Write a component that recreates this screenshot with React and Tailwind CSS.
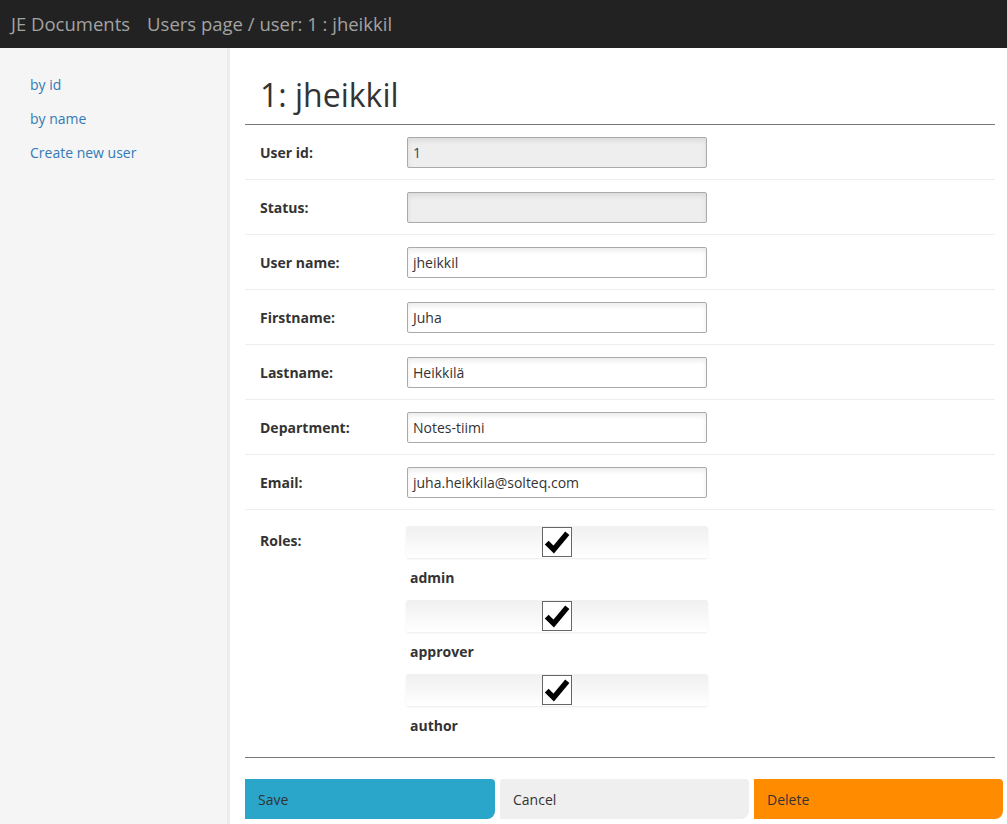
import React from 'react';

const FONT = { fontFamily: '"Open Sans", "Noto Sans", Arial, sans-serif' };

const FIELDS = [
  ['User id:', '1', true],
  ['Status:', '', true],
  ['User name:', 'jheikkil'],
  ['Firstname:', 'Juha'],
  ['Lastname:', 'Heikkilä'],
  ['Department:', 'Notes-tiimi'],
  ['Email:', 'juha.heikkila@solteq.com'],
];

const ROLES = ['admin', 'approver', 'author'];

function Check() {
  return (
    <span className="grid h-[30px] w-[30px] place-items-center border border-[#666] bg-white">
      <svg viewBox="0 0 24 24" className="h-[26px] w-[26px]">
        <path d="M2.5 12.5l6.5 6.5L21.5 4" fill="none" stroke="#000" strokeWidth="5" strokeLinecap="butt" strokeLinejoin="miter" />
      </svg>
    </span>
  );
}

export default function App() {
  return (
    <div className="min-h-[824px] bg-white text-[#333]" style={FONT}>
      <header className="flex h-[48px] items-center gap-[17px] bg-[#222] px-[11px] text-[18.5px] text-[#a3a3a3]">
        <span>JE Documents</span>
        <span>Users page / user: 1 : jheikkil</span>
      </header>
      <div className="flex">
        <aside className="min-h-[776px] w-[230px] shrink-0 border-r-[3px] border-[#ececec] bg-[#f5f5f5] pt-[26px] pl-[30px]">
          {['by id', 'by name', 'Create new user'].map((t) => (
            <a key={t} className="block h-[34px] text-[14px] leading-[22px] text-[#337ab7]">{t}</a>
          ))}
        </aside>
        <main className="flex-1 px-[15px] pr-[12px]">
          <h1 className="pt-[27px] pl-[15px] text-[32px] leading-[40px] text-[#333]">1: jheikkil</h1>
          <div className="mt-[9px] w-[750px] border-t border-[#777]">
            {FIELDS.map(([label, value, disabled]) => (
              <div key={label} className="flex h-[55px] items-center border-b border-[#eee]">
                <div className="w-[162px] pl-[15px] text-[14px] font-bold">{label}</div>
                <div className={`flex h-[31px] w-[300px] items-center rounded-[2px] border border-[#aaa] px-[5px] text-[14px] shadow-[inset_0_3px_5px_rgba(0,0,0,0.08)] ${disabled ? 'bg-[#eee] text-[#345]' : 'bg-white text-[#333]'}`}>{value}</div>
              </div>
            ))}
            <div className="flex pt-[16px] pb-[9px]">
              <div className="w-[161px] pl-[15px] pt-[4px] text-[14px] font-bold">Roles:</div>
              <div className="flex flex-col">
                {ROLES.map((r) => (
                  <div key={r}>
                    <div className="flex h-[32px] w-[302px] items-center justify-center rounded-[3px] bg-gradient-to-b from-[#f0f0f0] to-white shadow-[0_1px_2px_rgba(0,0,0,0.08)]">
                      <Check />
                    </div>
                    <div className="h-[42px] pl-[4px] pt-[11px] text-[14px] font-bold leading-[18px]">{r}</div>
                  </div>
                ))}
              </div>
            </div>
          </div>
          <div className="w-[750px] border-t border-[#777]" />
          <div className="mt-[21px] flex gap-[5px]">
            <button className="h-[40px] w-[250px] rounded-tr-[4px] rounded-br-[8px] bg-[#2ba6cb] pl-[13px] text-left text-[14px] text-[#333]">Save</button>
            <button className="h-[40px] w-[249px] rounded-tl-[3px] rounded-tr-[4px] rounded-br-[8px] bg-[#efefef] pl-[13px] text-left text-[14px] text-[#333]">Cancel</button>
            <button className="h-[40px] w-[249px] rounded-tr-[4px] rounded-br-[8px] bg-[#ff8c00] pl-[13px] text-left text-[14px] text-[#333]">Delete</button>
          </div>
        </main>
      </div>
    </div>
  );
}
